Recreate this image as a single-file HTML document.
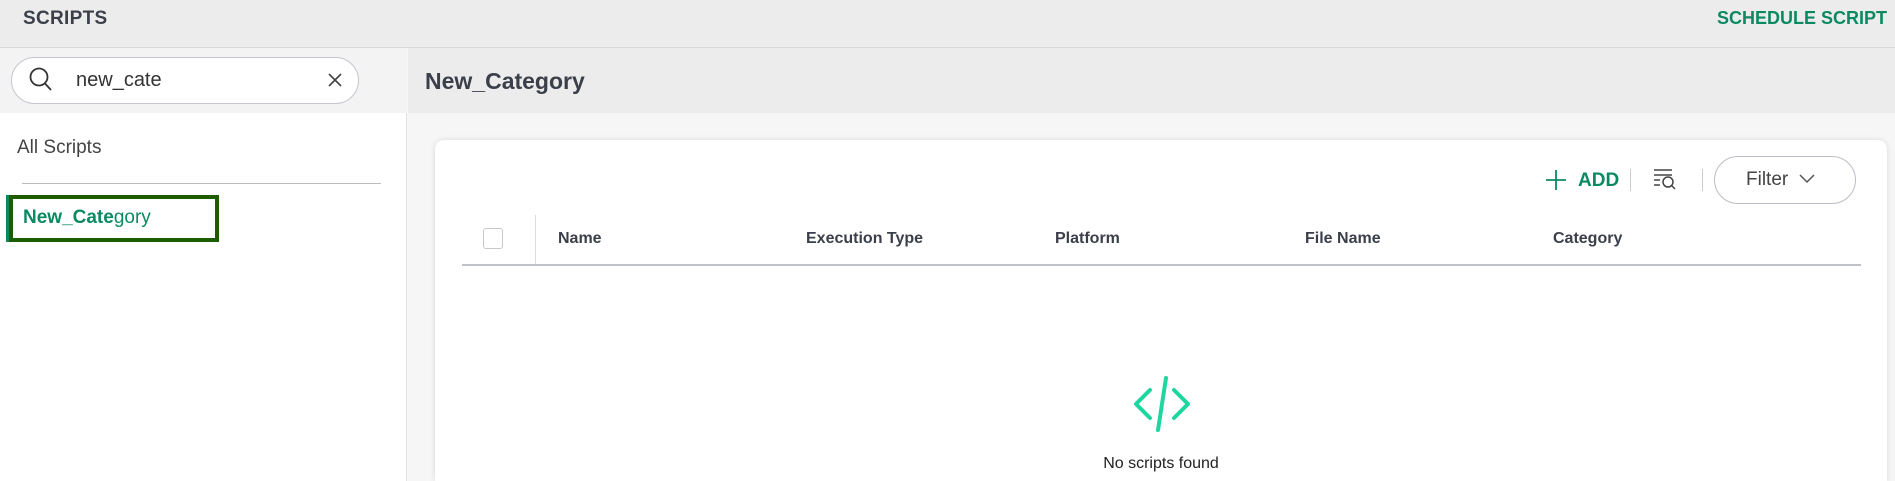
<!DOCTYPE html>
<html><head><meta charset="utf-8"><style>
*{box-sizing:border-box;margin:0;padding:0}
html,body{width:1895px;height:481px;overflow:hidden}
body{background:#f6f6f6;font-family:"Liberation Sans",sans-serif;color:#3b3f4a;position:relative}
.abs{position:absolute}
</style></head><body>
<div class="abs" style="left:0;top:0;width:1895px;height:48px;background:#ececec;border-bottom:1px solid #d8d8d8"></div>
<div class="abs" style="left:23px;top:8px;font-size:19px;font-weight:bold;color:#3b3f4a;letter-spacing:0.3px">SCRIPTS</div>
<div class="abs" style="right:8px;top:8px;font-size:18px;font-weight:bold;color:#0b8a62">SCHEDULE SCRIPT</div>

<div class="abs" style="left:0;top:48px;width:407px;height:433px;background:#fff;border-right:1px solid #e2e2e2"></div>
<div class="abs" style="left:0;top:48px;width:407px;height:65px;background:#f3f3f3"></div>
<div class="abs" style="left:11px;top:57px;width:348px;height:47px;border:1px solid #c3c6cc;border-radius:24px;background:#fff"></div>
<svg class="abs" style="left:28px;top:66px" width="26" height="28" viewBox="0 0 26 28"><circle cx="11" cy="11" r="8.5" fill="none" stroke="#333" stroke-width="1.8"/><path d="M17 17.5 L23 24" stroke="#333" stroke-width="1.8"/></svg>
<div class="abs" style="left:76px;top:69px;font-size:20px;color:#333">new_cate</div>
<svg class="abs" style="left:327px;top:72px" width="16" height="16"><path d="M2 2L14 14M14 2L2 14" stroke="#444" stroke-width="1.6"/></svg>
<div class="abs" style="left:17px;top:137px;font-size:19px;color:#444">All Scripts</div>
<div class="abs" style="left:22px;top:183px;width:359px;height:1px;background:#bbb"></div>
<div class="abs" style="left:6px;top:195px;width:3px;height:47px;background:#0b8a62"></div>
<div class="abs" style="left:9px;top:195px;width:210px;height:47px;border:4px solid #1e5c00"></div>
<div class="abs" style="left:23px;top:207px;font-size:19px;color:#0b8a62"><b>New_Cate</b>gory</div>

<div class="abs" style="left:408px;top:48px;width:1487px;height:65px;background:#ececec"></div>
<div class="abs" style="left:425px;top:68px;font-size:23px;font-weight:bold;color:#3b3f4a">New_Category</div>

<div class="abs" style="left:435px;top:140px;width:1452px;height:341px;background:#fff;border-radius:9px 9px 0 0;box-shadow:0 0 6px rgba(0,0,0,.12)"></div>
<svg class="abs" style="left:1546px;top:170px" width="20" height="20"><path d="M10 0V20M0 10H20" stroke="#0b8a62" stroke-width="1.8"/></svg>
<div class="abs" style="left:1578px;top:170px;font-size:19px;font-weight:bold;color:#0b8a62">ADD</div>
<div class="abs" style="left:1630px;top:169px;width:1px;height:22px;background:#ccc"></div>
<svg class="abs" style="left:1653px;top:168px" width="26" height="24"><path d="M1 2H19M1 7H19M1 12H7M1 17H7" stroke="#444" stroke-width="1.5"/><circle cx="15" cy="14" r="5" fill="none" stroke="#444" stroke-width="1.5"/><path d="M18.5 17.5L22 21" stroke="#444" stroke-width="1.5"/></svg>
<div class="abs" style="left:1702px;top:169px;width:1px;height:22px;background:#ccc"></div>
<div class="abs" style="left:1714px;top:156px;width:142px;height:48px;border:1px solid #b9bdc4;border-radius:24px"></div>
<div class="abs" style="left:1746px;top:169px;font-size:19px;color:#444">Filter</div>
<svg class="abs" style="left:1799px;top:174px" width="16" height="10"><path d="M1 1L8 8L15 1" fill="none" stroke="#555" stroke-width="1.5"/></svg>

<div class="abs" style="left:483px;top:228px;width:20px;height:21px;border:1px solid #c8c8c8;border-radius:3px"></div>
<div class="abs" style="left:535px;top:215px;width:1px;height:49px;background:#ddd"></div>
<div class="abs" style="top:230px;left:558px;font-size:16px;font-weight:bold">Name</div>
<div class="abs" style="top:230px;left:806px;font-size:16px;font-weight:bold">Execution Type</div>
<div class="abs" style="top:230px;left:1055px;font-size:16px;font-weight:bold">Platform</div>
<div class="abs" style="top:230px;left:1305px;font-size:16px;font-weight:bold">File Name</div>
<div class="abs" style="top:230px;left:1553px;font-size:16px;font-weight:bold">Category</div>
<div class="abs" style="left:462px;top:264px;width:1399px;height:2px;background:#bfc3c9"></div>

<svg class="abs" style="left:1132px;top:375px" width="60" height="60" viewBox="0 0 60 60"><path d="M18 15L4 29L18 43M42 15L56 29L42 43M34 3L26 55" fill="none" stroke="#1ed6a0" stroke-width="4" stroke-linecap="round" stroke-linejoin="round"/></svg>
<div class="abs" style="left:1061px;top:455px;width:200px;text-align:center;font-size:16px;color:#222">No scripts found</div>
</body></html>
